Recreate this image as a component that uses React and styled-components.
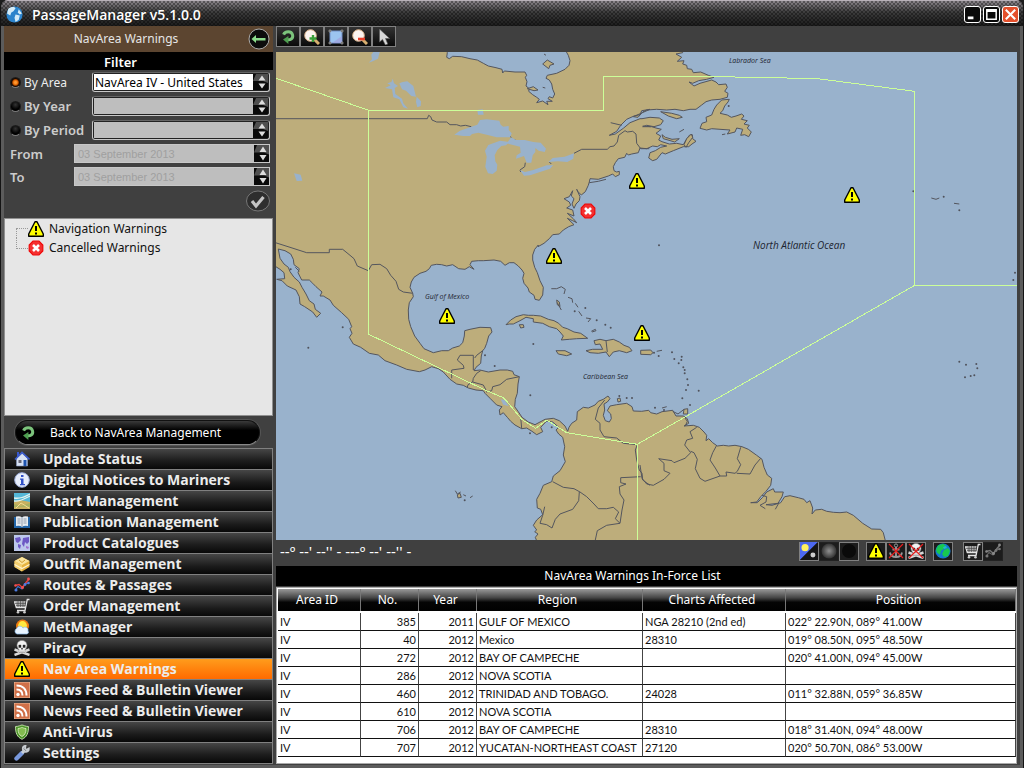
import React, { useState } from "react";
import styled, { createGlobalStyle, css } from "styled-components";

const GlobalStyle = createGlobalStyle`
	* {
		box-sizing: border-box;
	}
	body {
		margin: 0;
		background: #1c1c1c;
		font-family: "Noto Sans", "Open Sans", sans-serif;
		font-size: 12px;
		color: #e6e6e6;
	}
	button, input, select {
		font: inherit;
		color: inherit;
	}
`;

/* ---------- window frame ---------- */

const Window = styled.div`
	display: flex;
	flex-direction: column;
	min-height: 100vh;
	background: #404040;
	border: 1px solid #141414;
	border-top: none;
	border-radius: 8px 8px 0 0;
	overflow: hidden;
	box-shadow: inset 3px 0 #5c5c5c, inset -3px 0 #5c5c5c, inset 0 -3px #5c5c5c;
`;

const TitleBar = styled.header`
	display: flex;
	align-items: center;
	height: 26px;
	padding: 2px 4px 0 5px;
	border-top: 1px solid #b8b0b8;
	background:
		repeating-conic-gradient(rgba(0, 0, 0, 0.35) 0 25%, transparent 0 50%) 0 0 / 4px 4px,
		linear-gradient(#8c868c, #3c3c3c 45%, #1c1c1c);
`;

const Title = styled.h1`
	flex: 1;
	margin: 0 0 0 9px;
	font-family: "Open Sans", sans-serif;
	font-size: 14px;
	line-height: 20px;
	font-weight: 600;
	color: #fff;
`;

const WindowButton = styled.button`
	display: flex;
	width: 17px;
	height: 17px;
	margin-left: 2px;
	padding: 0;
	border: 1px solid #fff;
	border-radius: 3px;
	background: ${p => (p.$close ? "#e4502c" : "#0a0a0a")};
`;

const Body = styled.div`
	flex: 1;
	display: flex;
	gap: 3px;
	padding: 0 6px 4px 3px;
`;

/* ---------- sidebar ---------- */

const Sidebar = styled.aside`
	flex: none;
	width: 269px;
	display: flex;
	flex-direction: column;
`;

const SectionTitle = styled.div`
	display: flex;
	align-items: center;
	height: 26px;
	padding: 0 3px 0 0;
	background: #5c4530;
	h2 {
		flex: 1;
		margin: 0;
		padding-bottom: 2px;
		font-size: 12px;
		font-weight: 400;
		text-align: center;
	}
`;

const RoundButton = styled.button`
	width: 22px;
	height: 22px;
	padding: 0;
	border: none;
	background: none;
	svg {
		display: block;
	}
`;

const FilterTitle = styled.h3`
	margin: 0;
	padding-right: 36px;
	height: 18px;
	line-height: 20px;
	font-size: 13px;
	font-weight: 600;
	text-align: center;
	color: #fff;
	background: #000;
`;

const Filter = styled.form`
	display: flex;
	flex-direction: column;
	gap: 4px;
	height: 148px;
	padding: 2px 3px 0 6px;
`;

const FilterRow = styled.div`
	display: flex;
	align-items: center;
	height: ${p => (p.$date ? 19 : 20)}px;
`;

const FilterLabel = styled.label`
	flex: 1;
	display: flex;
	align-items: center;
	gap: 3px;
	white-space: nowrap;
	font-size: ${p => (p.$on ? 12 : 13)}px;
	font-weight: ${p => (p.$on ? 400 : 600)};
	color: ${p => (p.$on ? "#eee" : "#ccc")};
`;

const Radio = styled.input`
	appearance: none;
	width: 11px;
	height: 11px;
	margin: 0;
	border: 1px solid #1c1c1c;
	border-bottom-color: #777;
	border-radius: 50%;
	background: radial-gradient(circle at 50% 30%, #333, #000 60%);
	&:checked {
		background: radial-gradient(#ff9a30 0 15%, #e06000 40%, #1a0a00 60%);
	}
`;

const Combo = styled.div`
	flex: none;
	display: flex;
	width: ${p => (p.$date ? 196 : 178)}px;
	height: 100%;
	padding: ${p => (p.$date ? 0 : 1)}px;
	border: 1px solid #c8c8c8;
	border-top-color: ${p => (p.$date ? "#c8c8c8" : "#666")};
	border-radius: ${p => (p.$date ? 0 : 3)}px;
	background: ${p => (p.$date ? "#bebebe" : "#222")};
	select, input {
		flex: 1;
		min-width: 0;
		appearance: none;
		border: none;
		border-radius: 0;
		padding: 0 1px;
		outline: none;
		background: #fff;
		color: #000;
		opacity: 1;
	}
	select:disabled, input:disabled {
		background: #bebebe;
		color: #a0a0a0;
	}
	input {
		padding: 0 3px;
		font-family: "Liberation Sans", Arial, sans-serif;
		font-size: 11px;
	}
	svg {
		flex: none;
	}
`;

const ApplyRow = styled.div`
	display: flex;
	justify-content: flex-end;
	padding-right: 2px;
`;

const Tree = styled.ul`
	flex: 1;
	min-height: 120px;
	margin: 0;
	padding: 0 0 0 22px;
	list-style: none;
	background: #e6e6e6;
	border: 1px solid #909090;
	color: #111;
`;

const TreeItem = styled.li`
	display: flex;
	align-items: center;
	gap: 5px;
	height: 19px;
	font-size: 12px;
	&::before {
		content: "";
		align-self: ${p => (p.$last ? "flex-start" : "flex-end")};
		width: 11px;
		height: ${p => (p.$last ? 10 : 9)}px;
		margin-left: -11px;
		margin-right: -5px;
		border-left: 1px dotted #999;
		border-${p => (p.$last ? "bottom" : "top")}: 1px dotted #999;
	}
`;

const BackButton = styled.button`
	display: flex;
	align-items: center;
	gap: 14px;
	height: 25px;
	margin: 4px 13px 3px 11px;
	padding: 0 4px;
	border: 1px solid #111;
	border-bottom-color: #888;
	border-radius: 13px;
	background: linear-gradient(#3a3a3a, #000 40%, #000);
	box-shadow: 0 0 0 1px #555;
	color: #fff;
`;

const Nav = styled.nav`
	border: 1px solid #808080;
	border-bottom: none;
`;

const NavButton = styled.button`
	display: flex;
	align-items: center;
	gap: 13px;
	width: 100%;
	height: 21px;
	padding: 0 9px;
	border: none;
	border-bottom: 1px solid #808080;
	background: linear-gradient(#464646, #1c1c1c 60%, #080808);
	font-family: "Open Sans", sans-serif;
	font-size: 14px;
	line-height: 20px;
	font-weight: 700;
	color: #ececec;
	${p => p.$active && css`
		background: linear-gradient(#ff9c1c, #ff6a00);
	`}
`;

/* ---------- main area ---------- */

const Main = styled.main`
	flex: 1;
	min-width: 0;
	display: flex;
	flex-direction: column;
`;

const Toolbar = styled.div`
	display: flex;
	height: 26px;
	align-items: flex-start;
`;

const ToolButton = styled.button`
	display: flex;
	align-items: center;
	justify-content: center;
	width: 24px;
	height: 21px;
	padding: 0;
	border: 1px solid #808080;
	background: linear-gradient(#333, #0a0a0a);
`;

const MapView = styled.svg`
	flex: 1;
	display: block;
	width: 100%;
	height: 0;
	min-height: 240px;
	background: #99b2cc;
	font-family: "Open Sans", "Noto Sans", sans-serif;
	font-style: italic;
`;

const StatusBar = styled.div`
	display: flex;
	align-items: center;
	height: 26px;
	padding: 0 14px 4px 4px;
	color: #fff;
`;

const Coordinates = styled.span`
	flex: 1;
	font-size: 15px;
	line-height: 20px;
`;

const Group = styled.div`
	display: flex;
	margin-left: ${p => p.$gap || 0}px;
`;

const Toggle = styled.button`
	display: flex;
	align-items: center;
	justify-content: center;
	width: 20px;
	height: 19px;
	padding: 0;
	border: 1px solid ${p => (p.$flat ? "#222" : "#808080")};
	background: #1c1c1c;
`;

const ListTitle = styled.h2`
	margin: 0 0 1px;
	height: 20px;
	line-height: 20px;
	font-size: 12px;
	font-weight: 400;
	text-align: center;
	color: #fff;
	background: #000;
	padding-right: 28px;
`;

const ListPanel = styled.div`
	height: 177px;
	border: 1px solid #aaa;
	background: #fff;
	padding: 1px 0 0 1px;
`;

const Table = styled.table`
	width: 100%;
	table-layout: fixed;
	border-collapse: separate;
	border-spacing: 0;
	font-family: Lato, sans-serif;
	font-size: 11px;
	line-height: 16px;
	color: #111;
	th {
		height: 22px;
		padding: 0 4px 0 0;
		font-family: "Noto Sans", sans-serif;
		font-size: 12px;
		font-weight: 400;
		color: #fff;
		background: linear-gradient(#999, #444 40%, #050505 60%, #000);
		border-right: 1px solid #777;
	}
	tbody::before {
		content: "";
		display: block;
		height: 2px;
	}
	td {
		height: 18px;
		padding: 0 0 0 2px;
		border-bottom: 1px solid #111;
		border-right: 1px solid #444;
		white-space: nowrap;
		overflow: hidden;
	}
	td.num {
		text-align: right;
		padding: 0 2px;
	}
`;

const Col = styled.col`
	width: ${p => (p.$width ? p.$width + "px" : "auto")};
`;

/* ---------- icons ---------- */

const Icon = ({ children, size = 16, ...rest }) => (
	<svg width={size} height={size} viewBox="0 0 16 16" aria-hidden="true" {...rest}>
		{children}
	</svg>
);

const WarningShape = () => (
	<g>
		<path d="M7 .7h2L15.3 13v2.300H.7V13Z" fill="#ff0" stroke="#000" strokeWidth="1.400" strokeLinejoin="round" />
		<path d="M7 5h2v5H7ZM7 11.500h2v2H7Z" fill="#000" />
	</g>
);

const CancelShape = () => (
	<g>
		<path d="M5 1.200h6L14.800 5v6L11 14.800H5L1.200 11V5Z" fill="#f43030" stroke="#f00808" strokeWidth="1.200" />
		<path d="M5 5l6 6M11 5l-6 6" stroke="#fff" strokeWidth="2.600" />
	</g>
);

const Warning = () => <Icon><WarningShape /></Icon>;
const Cancel = () => <Icon><CancelShape /></Icon>;

const Globe = () => (
	<Icon size={17}>
		<circle cx="8" cy="8" r="7.600" fill="#2c84cc" />
		<path d="M2 3c3-3 6-2 7-1l-2 3-2 1-1 3-3-2Zm7 5 4 1-1 4-3 2-1-4Zm3-5 3 4-2 1-2-2Z" fill="#d4ecf8" />
	</Icon>
);

const Refresh = () => (
	<Icon>
		<path d="M3.600 5.600C5 2 11.500 1.600 12.600 6c.8 3.600-2.600 5.400-5.600 4.600" fill="none" stroke="#7cc47c" strokeWidth="3" />
		<path d="M8.400 7v8L3 10.600Z" fill="#4e9e50" />
	</Icon>
);

const Magnifier = ({ plus }) => (
	<Icon>
		<path d="M10 10l5 5" stroke="#d8b070" strokeWidth="3" />
		<circle cx="6.500" cy="6.500" r="5.800" fill="#fbf4f0" stroke="#d8b088" />
		{plus
			? <path d="M9 6v7M5.500 9.500h7" stroke="#3aa03a" strokeWidth="2.400" />
			: <path d="M6 10h7" stroke="#e8402c" strokeWidth="2.600" />}
	</Icon>
);

const Extent = () => (
	<Icon>
		<path d="M2 2h12v12H2Z" fill="#9cc4f0" stroke="#7090c8" />
		<path d="M14 7v7H4Z" fill="#a0a0dc" opacity=".7" />
		<path d="M1 1h2v2H1ZM13 1h2v2h-2ZM1 13h2v2H1ZM13 13h2v2h-2Z" fill="#555" stroke="#aaa" strokeWidth=".6" />
	</Icon>
);

const Pointer = () => (
	<Icon>
		<path d="M3.500 0v13l3-2.600L9.400 16l2.400-1L9.500 9.500h4.200Z" fill="#d8d8d8" stroke="#555" strokeWidth=".6" />
	</Icon>
);

const House = () => (
	<Icon>
		<path d="M3 1h2v3L3 6Z" fill="#3858d0" />
		<path d="M2.500 7.500 8.500 2l5 5.500V15h-11Z" fill="#d8e2f4" stroke="#8898c0" strokeWidth=".6" />
		<path d="M1 8.500 8 1.500l7.500 7" fill="none" stroke="#3c5ccc" strokeWidth="1.700" />
		<path d="M9.500 9h3v6h-3Z" fill="#1e54b0" />
		<path d="M4.500 9h3v3h-3Z" fill="#667" />
	</Icon>
);

const Info = () => (
	<Icon>
		<circle cx="8" cy="8" r="7.300" fill="#e8eefc" stroke="#9cacd8" />
		<path d="M7 3h2.500v2H7ZM6 6.500h3.500V12H11v1.300H6V12h1V7.800H6Z" fill="#3050c8" />
	</Icon>
);

const Chart = () => (
	<Icon>
		<path d="M0 0h16v16H0Z" fill="#54b8d8" />
		<path d="M0 9l6-2 10 2v7H0Z" fill="#c8b060" />
		<path d="M0 11l7 2 9-3v4H0Z" fill="#a8b060" />
		<path d="M0 5c6 1 10-1 16-4M0 8c6 1 10-2 16-5" stroke="#e4f4f0" fill="none" strokeWidth="1.300" />
		<path d="M2 15l5-5 8 5" stroke="#f0dc90" fill="none" />
	</Icon>
);

const Book = () => (
	<Icon>
		<path d="M0 3h16v11H0Z" fill="#2466a8" />
		<path d="M2 2.500q4-1 6 1 2-2 6-1v9.500q-4-1-6 1-2-2-6-1Z" fill="#e8ecf0" />
		<path d="M8 3.500V13M3.500 5H6.500M3.500 7H6.500M3.500 9H6.500M9.500 5h3M9.500 7h3M9.500 9h3" stroke="#8894a4" strokeWidth=".9" />
	</Icon>
);

const Catalogue = () => (
	<Icon>
		<path d="M0 0h16v16H0Z" fill="#bcc8ec" />
		<path d="M1 3l5-1 1 3-3 3-2-1ZM4 9l3 1-1 4-2-2ZM9 3l6-1v5l-2 2-2-2-1 5-2-3Z" fill="#6c58c4" />
		<path d="M12 11l3 1-1 2-2-1Z" fill="#a070d0" />
	</Icon>
);

const Package = () => (
	<Icon>
		<path d="M8 1 15.500 5v6L8 15.500.5 11V5Z" fill="#e8b440" />
		<path d="M8 1 15.500 5 8 9 .5 5Z" fill="#fbe49c" />
		<path d="M8 9v6.500L.5 11V5Z" fill="#f4d070" />
		<path d="M.5 8.500 8 12.500l7.500-4" fill="none" stroke="#fff4d0" strokeWidth="1.200" />
		<path d="M5 4l3 2.500L11 4" stroke="#d09c30" fill="none" />
	</Icon>
);

const Route = ({ gray }) => (
	<Icon>
		<path d="M1 13.500 4 9.500 8 12l3-5 4-1" fill="none" stroke={gray ? "#666" : "#4070d0"} strokeWidth="1.200" />
		<path d="M1 8.500 5 7.500l3.500 3L12 5.500l3-3.500" fill="none" stroke={gray ? "#777" : "#e04040"} strokeWidth="1.400" />
		<g fill={gray ? "#777" : "#4c7ce0"}>
			<circle cx="2" cy="13" r="1.500" />
			<circle cx="11" cy="7.500" r="1.400" />
			<circle cx="14.500" cy="6" r="1.300" />
		</g>
		<g fill={gray ? "#888" : "#f05050"}>
			<circle cx="1.500" cy="8.500" r="1.300" />
			<circle cx="8.500" cy="10.500" r="1.500" />
			<circle cx="14.500" cy="2" r="1.400" />
		</g>
	</Icon>
);

const Cart = () => (
	<Icon>
		<path d="M0 3h11.500l-1 6.500h-8Z" fill="#aaa" />
		<path d="M15.500 1.500h-2.200L11 12.500H3M.5 3.500l1.800 6h9" fill="none" stroke="#e4e4e4" strokeWidth="1.300" />
		<path d="M1 5.500h11M2 7.500h9.500M4 3v6M6.500 3v6M9 3v6" stroke="#444" strokeWidth=".6" />
		<circle cx="4" cy="14.300" r="1.300" fill="#ccc" />
		<circle cx="10.500" cy="14.300" r="1.300" fill="#ccc" />
	</Icon>
);

const Weather = () => (
	<Icon>
		<circle cx="8.500" cy="7" r="6.500" fill="#f07c10" />
		<circle cx="8.500" cy="6.500" r="4.400" fill="#ffe840" />
		<path d="M3 15a3 3 0 0 1-.4-5.500A3.500 3.500 0 0 1 9 9a3 3 0 0 1 5 3 2 2 0 0 1-1 3Z" fill="#e8f4ff" stroke="#88b8e8" strokeWidth=".7" />
	</Icon>
);

const SkullShape = () => (
	<g>
		<path d="M.5 9.500l15 5.500M15.500 9.500.5 15" stroke="#d8d8d8" strokeWidth="2.400" />
		<path d="M3 6C2.500-1.500 13.500-1.500 13 6l-1 2.500-1 1v3H5v-3l-1-1Z" fill="#f2f2f2" stroke="#888" strokeWidth=".6" />
		<path d="M4.800 5h2.200v2.500H4.800ZM9 5h2.200v2.500H9ZM7.500 8h1v1.300h-1ZM7 10.500v1.500M9 10.500v1.500" fill="#222" stroke="#333" strokeWidth=".4" />
	</g>
);

const Skull = () => <Icon><SkullShape /></Icon>;

const Cross = () => <path d="M1 1l14 14M15 1 1 15" stroke="#e81c1c" strokeWidth="1.200" />;

const SkullOff = () => <Icon><SkullShape /><Cross /></Icon>;

const AnchorOff = () => (
	<Icon>
		<path d="M8 4v10M4.500 6.500h7M2 9.500c.5 3 3 4.500 6 4.500s5.500-1.500 6-4.500" fill="none" stroke="#999" strokeWidth="1.800" />
		<circle cx="8" cy="2.500" r="1.600" fill="none" stroke="#999" />
		<Cross />
	</Icon>
);

const Feed = () => (
	<Icon>
		<path d="M0 0h16v16H0Z" fill="#d07048" stroke="#e8b898" strokeWidth="1.200" />
		<circle cx="4" cy="12.500" r="1.700" fill="#fff" />
		<path d="M2.500 7.500c4 0 6 2.500 6 6M2.500 3.500c6.500 0 10 4 10 10" fill="none" stroke="#fff" strokeWidth="2" />
	</Icon>
);

const Shield = () => (
	<Icon>
		<path d="M1.500 2.500C5 2.500 6.500 1 8 1s3 1.500 6.500 1.500C14.500 9 13 13 8 15.300 3 13 1.500 9 1.500 2.500Z" fill="#4c9428" stroke="#b8d8a0" />
		<path d="M4 4.500C6 4.500 7 3.500 8 3.500s2 1 4 1c0 4-1 6.500-4 8-3-1.500-4-4-4-8Z" fill="#84bc50" stroke="#e0f0c8" strokeWidth=".8" />
	</Icon>
);

const Wrench = () => (
	<Icon>
		<path d="M2.500 13.500 8 8" stroke="#7898dc" strokeWidth="4.400" strokeLinecap="round" />
		<path d="M8 8l3-3" stroke="#c8d0d8" strokeWidth="3" />
		<path d="M14.800 3.500A3 3 0 1 1 11.500.8L11 3.500l1.500 1.200Z" fill="none" stroke="#c8ccd0" strokeWidth="1.800" />
	</Icon>
);

const Earth = () => (
	<Icon>
		<circle cx="8" cy="8" r="7.600" fill="#1478d0" />
		<path d="M3 2.500 8 .8l3 2-2 3-3 2-1 4-3-2-1-3ZM9 7l4-2 2 3-2 5-4 1-2-3Z" fill="#18c850" />
		<path d="M8 4l3-1 1 2-3 1Z" fill="#20b8d0" />
	</Icon>
);

const DayNight = () => (
	<Icon size={18}>
		<path d="M0 0h16L0 16Z" fill="#4c68f0" />
		<path d="M16 0v16H0Z" fill="#141414" />
		<circle cx="4.500" cy="5" r="3.200" fill="#fff060" />
		<circle cx="11.500" cy="11.500" r="2.200" fill="#ccc" />
	</Icon>
);

const Dusk = () => (
	<Icon>
		<defs>
			<radialGradient id="dusk">
				<stop offset="0" stopColor="#909090" />
				<stop offset="1" stopColor="#333" />
			</radialGradient>
		</defs>
		<circle cx="8" cy="8" r="7.500" fill="url(#dusk)" />
	</Icon>
);

const Night = () => (
	<Icon>
		<circle cx="8" cy="8" r="7" fill="#0a0a0a" />
	</Icon>
);

const Spinner = () => (
	<svg width="15" height="100%" viewBox="0 0 15 16" preserveAspectRatio="none" aria-hidden="true">
		<path d="M0 0h15v16H0Z" fill="#0a0a0a" />
		<path d="M3 0h12v9L10 7H0Z" fill="#888" opacity=".55" />
		<path d="M9 1.500l3.500 5h-7ZM9 14.500l3.500-5h-7Z" fill="#ddd" />
	</svg>
);

const BackArrow = () => (
	<svg width="22" height="22" viewBox="0 0 22 22" aria-hidden="true">
		<circle cx="11" cy="11" r="10" fill="#0c0c0c" stroke="#aaa" />
		<path d="M3.500 11 8 7v3h9.500v2.500H8V15Z" fill="#8cdc8c" />
	</svg>
);

const Check = () => (
	<svg width="24" height="22" viewBox="0 0 24 22" aria-hidden="true">
		<ellipse cx="12" cy="11" rx="11.500" ry="10" fill="#2e2e2e" stroke="#777" />
		<path d="M6 11l4 5 7.500-9" fill="none" stroke="#c4c4c4" strokeWidth="3.200" />
	</svg>
);

/* ---------- map data ---------- */

// The coastline is kept on four overlapping sheets, three units to a map pixel.
const sheets = {
	nw: [810, 0],
	ne: [1920, 0],
	sw: [810, 690],
	se: [1920, 690]
};

const project = (sheet, pair) => {
	const [x, y] = pair.split(",").map(Number);
	const [ox, oy] = sheets[sheet];
	return [((x + ox - 828) / 3).toFixed(1), ((y + oy - 156) / 3).toFixed(1)];
};

const trace = parts =>
	"M" +
	parts
		.map(([sheet, points]) => points.split(" ").map(p => project(sheet, p).join(" ")).join("L"))
		.join("L");

const mainland = trace([
	["nw", "0,140 528,140 532,158 530,172 538,176 548,169 575,170 600,176 622,180 640,190 655,198 678,203 696,208 698,219 703,213 735,216 765,216 770,226 766,232 771,245 768,258 778,266 776,274 788,284 800,292 808,298 800,308 818,303 834,314 830,304 847,304 834,296 838,290 848,294 854,282 848,268 845,252 838,240 828,235 832,226 860,220 885,208 897,196 900,182 895,166 886,150"],
	["ne", "-40,140 118,140 128,158 108,162 125,172 112,184 132,182 128,192 140,196 142,206 155,208 160,218 182,216 205,226 222,232 200,238 176,242 158,250 147,246 162,258 180,250 215,240 228,246 236,254 258,252 262,262 254,274 264,280 262,292 240,298 215,300 198,305 185,315 168,328 150,328 130,332 105,328 80,330 50,328 20,330 8,336 -6,352 -20,350"],
	["nw", "1140,328 1115,332 1110,344 1092,348 1070,358 1052,376 1040,394 1018,406 1036,402 1060,385 1080,368 1110,356"],
	["ne", "6,356 30,352 58,354 70,362 62,374 42,380 20,376 8,380 35,380 48,384 64,388 48,400 62,408 56,420 66,425 88,432 110,430 130,434 138,420 148,406 157,404 158,416 168,424 156,432 146,440 130,440 100,452 76,462 66,458 50,478 38,482 26,474 30,458 46,452 62,442 80,438 62,434 52,440 38,438 20,446 0,444"],
	["nw", "1105,458 1085,462 1075,465 1070,460 1064,472 1045,476 1036,488 1030,500 1032,512 1040,516 1048,514 1048,524 1036,530 1028,522 1015,528 985,538 960,536 958,546 955,556 946,575 934,585 924,575 920,568 930,590 928,602 918,612 912,625 906,612 912,596 904,588 908,572 898,590 882,596 898,606 902,616 890,624 908,630 912,648 892,640 910,656 920,668 908,662 892,655 912,674 896,680 880,690 868,702 848,704 838,716 822,730 804,740"],
	["sw", "805,45 794,58 788,75 788,90 794,112 802,128 810,152 820,172 818,195 808,211 795,208 792,196 778,186 774,174 762,160 758,145 762,130 756,120 745,108 732,98 718,98 705,106 692,94 672,90 640,92 625,92 605,94 600,104 612,118 598,110 585,118 566,116 548,104 530,108 515,104 500,103 484,106 478,116 468,124 450,130 432,142 424,156 420,172 428,190 430,200 418,218 415,240 416,268 422,290 434,318 450,340 462,356 490,368 515,362 535,362 548,354 568,348 578,338 583,318 584,302 600,298 630,292 662,293 666,306 656,318 650,340 644,355 638,362 634,378 632,400 618,412 612,422 630,420 655,426 690,420 712,420 728,424 732,434 748,440 744,462 742,490 736,508 734,530 745,545 756,562 775,576 795,584 810,576 825,568 850,565 868,572 885,588 893,604 897,592 905,580 920,570 922,545 940,532 955,534 975,525 985,514 1000,508 1014,498 1020,506 1012,516 1002,522 1004,540 1000,556 1006,572 1018,576 1024,566 1022,552 1012,542 1020,528 1040,524 1070,520 1086,530 1090,543 1115,544"],
	["se", "26,541 32,548 50,552 66,545 98,541 108,558 130,558 142,566 146,580 132,588 160,586 178,592 192,606 200,616 198,632 206,626 218,638 232,648 250,646 266,648 285,646 306,650 325,658 350,676 366,688 372,712 382,735 395,745 392,766 378,784 362,800 350,816 332,818 352,818 368,802 380,786 400,776 404,786 430,786 426,800 414,820 378,824 396,826 422,818 434,800 450,797 475,803 492,808 500,818 510,812 518,834 516,852 526,840 545,838 560,844 580,847 600,848 620,846 640,856 668,880 695,897 722,898 730,908 738,940"],
	["sw", "805,945 796,922 804,912 794,905 800,900 790,886 800,870 818,854 812,838 802,834 800,808 810,790 820,766 845,755 850,738 870,722 886,695 880,675 884,650 878,622 866,612 858,600 866,592 848,576 830,573 812,592 818,605 800,614 786,604 770,594 755,596 735,585 722,574 712,562 700,548 690,555 688,540 696,530 680,525 660,505 645,490 640,482 618,480 595,474 580,466 560,462 540,448 520,426 505,416 485,410 465,420 448,425 410,418 380,405 345,392 325,375 298,370 272,352 250,342 238,322 246,310 240,296 245,290 236,268 215,248 190,226 180,210 160,198 150,198 156,186 138,170 128,160 118,150 95,150 84,128 88,116 72,104 70,88 62,72 45,62 25,57 30,85 42,102 55,112 60,125 72,142 88,156 96,172 108,192 118,212 132,222 136,238 152,250 140,262 128,246 104,230 90,222 88,200 78,180 52,168 36,152 20,148 44,146 42,128 30,118 8,104"]
]) + "Z";

const islands = [
	["ne", "180,385 186,370 200,365 198,352 215,345 222,328 230,315 245,300 268,298 264,306 254,318 248,332 240,340 262,345 274,352 288,348 305,342 312,348 304,358 322,362 312,372 328,376 322,384 334,396 326,410 314,404 302,406 308,388 290,384 285,396 262,402 270,390 240,388 215,386 200,390"],
	["ne", "62,335 95,340 118,346 127,352 110,356 85,348"],
	["ne", "66,404 76,412 96,418 118,416 104,426 84,420 70,416"],
	["ne", "132,434 140,416 154,402 158,412 146,428 138,442"],
	["sw", "708,284 722,270 738,260 760,254 775,256 790,256 812,258 835,268 852,272 866,280 878,292 892,296 912,306 932,310 953,325 920,326 898,328 874,330 880,318 870,306 860,296 838,290 818,280 790,276 790,266 768,262 750,272 730,282 718,282"],
	["sw", "748,284 760,284 762,292 752,294"],
	["sw", "858,362 885,362 905,372 890,377 865,372"],
	["sw", "972,332 990,328 1008,332 1030,328 1048,336 1062,346 1078,352 1086,362 1070,368 1048,362 1030,366 1018,380 1008,366 985,370 960,368 948,362 968,358 998,358 990,342 976,344"],
	["sw", "1112,361 1142,360 1149,368 1142,374 1112,373"],
	["sw", "860,210 868,216 870,230 862,224"],
	["se", "132,538 143,536 143,552 130,552"],
	["nw", "772,266 790,260 804,270 792,272"],
	["nw", "818,192 832,180 852,192 840,196 836,206"],
	["sw", "562,794 570,790 574,802 564,804"],
	["sw", "1042,506 1050,504 1052,514 1044,516"]
].map(part => trace([part]) + "Z");

const lakes = [
	["nw", "553,404 570,392 600,382 622,374 630,360 650,358 688,362 692,374 700,380 716,378 716,390 725,400 720,412 700,412 680,412 650,404 625,398 606,402 600,408 580,408"],
	["nw", "645,452 655,435 690,422 718,426 708,436 694,438 682,450 674,466 676,484 682,494 680,512 668,522 654,520 646,500 650,470"],
	["nw", "710,430 724,412 738,420 764,420 790,426 812,428 828,446 824,456 806,452 796,444 796,456 788,466 784,488 770,488 762,468 738,476 740,466 752,458 750,440"],
	["nw", "750,510 765,516 790,510 830,496 850,496 840,506 810,516 780,526 762,527"],
	["nw", "835,486 848,474 884,470 912,460 910,476 892,486 864,484"],
	["nw", "622,330 638,328 641,344 624,344"],
	["nw", "388,250 398,246 412,244 430,258 438,290 424,288 408,272 396,268"],
	["nw", "345,264 362,256 352,250 364,246 368,236 372,250 384,258 374,264 376,282 396,296 400,310 414,326 400,322 388,298 370,292 366,268"],
	["nw", "440,290 453,304 452,318 442,322 438,306"],
	["nw", "72,520 92,524 97,542 80,543"],
	["nw", "296,188 306,178 304,164 314,150 330,152 324,176 308,184"],
	["sw", "692,508 704,510 716,528 700,524"]
].map(part => trace([part]) + "Z");

const borders = [
	["nw", "10,356 472,356 476,346 482,350 486,360 500,366 530,366 540,374 560,374 572,378 586,376 604,380"],
	["nw", "708,406 722,410 728,418 740,422"],
	["nw", "766,488 764,500 750,510 752,516"],
	["nw", "838,486 844,492"],
	["nw", "912,460 935,448 1012,448 1020,440 1032,438 1042,426 1046,406 1065,392 1072,396 1088,394 1098,402 1100,430 1112,446 1138,446"],
	["nw", "1022,368 1055,376"],
	["nw", "1118,378 1142,380"],
	["nw", "958,548 985,544 1008,538"],
	["sw", "10,36 60,52 110,68 178,68 178,58 218,58 240,76 252,86 262,108 295,122 305,104 330,103 350,116 362,136 378,154 386,178 400,186 428,190"],
	["sw", "545,445 545,420 582,415 580,406 562,390 570,376 610,376 610,420"],
	["sw", "638,362 620,376 614,384"],
	["sw", "632,422 620,430 610,445 608,456 594,464 592,472"],
	["sw", "608,456 640,465 648,480"],
	["sw", "648,486 665,482 668,470 690,464 710,448 748,440"],
	["sw", "752,562 755,596"],
	["sw", "1004,510 985,534 976,568 990,580 990,600 1002,620 1040,624 1060,640 1102,644 1096,660 1100,690 1108,720 1116,730 1118,750 1140,766"],
	["sw", "848,755 880,772 912,776 930,786 950,800 972,822 985,836 1010,836 1030,832 1046,846 1036,866 1050,880"],
	["sw", "1112,740 1052,743 1052,758 1068,762 1048,770 1050,792 1062,810 1056,840 1050,880 1010,886 982,902 976,930"],
	["sw", "928,786 926,812 908,838 870,852 856,868 846,894 830,884 810,880 818,856 824,830"],
	["se", "0,705 6,745 20,762 40,766 72,748 90,730 72,722 72,700 56,686 96,692 102,698 135,685 152,668 134,645 140,630 158,625 150,605 170,592"],
	["se", "152,664 162,668 172,688 166,716 180,745 195,754 240,738 260,738 258,726 285,730 292,724 302,704 292,686 302,652"],
	["se", "240,738 226,714 210,690 218,668 230,646"],
	["se", "290,730 330,732 345,705 362,685"],
	["se", "366,796 380,800 378,816 360,826 376,836"],
	["se", "416,820 406,838"],
	["se", "132,560 142,574 136,588"],
	["se", "98,544 114,552 132,538"],
	["sw", "844,176 860,176 874,170 886,178 882,192"],
	["sw", "894,202 906,206 908,218"],
	["sw", "916,220 924,232"],
	["sw", "926,244 936,258"],
	["sw", "948,264 962,266 954,276"],
	["sw", "964,304 976,298 978,302 966,306"],
	["sw", "1008,332 1012,366"],
	["sw", "862,218 874,240"],
	["sw", "556,782 562,792 572,786"],
	["sw", "580,794 588,798"],
	["sw", "600,803 608,798"],
	["sw", "76,112 88,124"],
	["ne", "874,594 888,598 898,594"],
	["ne", "942,610 958,612"],
	["ne", "118,396 132,388"],
	["ne", "246,404 256,402"],
	["nw", "822,162 828,166"],
	["nw", "818,262 826,264"],
	["se", "50,364 66,361"],
	["se", "66,534 80,530"]
].map(part => trace([part]));

const islets = [
	["sw", "218,292 115,353 790,342 781,496 674,408 645,376 946,234 914,244 980,271 1006,284 1022,293 1070,504 1086,504 1048,498 62,118 584,811 780,610 845,592"],
	["se", "42,368 56,378 96,367 103,387 125,380 124,390 116,400 130,412 134,430 134,420 142,448 144,465 138,480 127,505 176,482 150,525 45,533 72,540"],
	["se", "958,395 978,404 1009,402 1012,415 975,442 992,438 1003,436 1125,128 1120,150 57,46"],
	["ne", "820,574 911,590 958,631 266,318"]
].flatMap(([sheet, points]) => points.split(" ").map(p => project(sheet, p)));

const areaLimits = [
	[["nw", "10,232 296,331 1000,331 1000,230 1140,230"], ["ne", "285,230 286,232 440,232 441,235 525,235 824,274"], ["se", "824,166 1140,166"]],
	[["nw", "296,331"], ["sw", "296,313 545,432 645,480 700,503 712,516 755,568 797,595 830,570 890,608 1102,643"], ["se", "824,166"]],
	[["sw", "1102,643 1102,940"]]
].map(trace);

const seaNames = [
	{ name: "Labrador Sea", x: 453, y: 11, size: 7 },
	{ name: "North Atlantic Ocean", x: 477, y: 197, size: 10 },
	{ name: "Gulf of Mexico", x: 149, y: 247, size: 7 },
	{ name: "Caribbean Sea", x: 307, y: 327, size: 7 }
];

const markers = [
	{ x: 353, y: 121 },
	{ x: 568, y: 135 },
	{ x: 270, y: 196 },
	{ x: 163, y: 256 },
	{ x: 358, y: 273 },
	{ x: 304, y: 151, cancelled: true }
];

const WarningMap = () => (
	<MapView viewBox="0 0 741 488" preserveAspectRatio="xMidYMid slice" role="img" aria-label="NavArea IV map">
		<g stroke="#54565e" strokeWidth="1" strokeLinejoin="round">
			<path d={mainland} fill="#bdad7b" />
			{islands.map(d => <path key={d} d={d} fill="#bdad7b" />)}
			{borders.map(d => <path key={d} d={d} fill="none" />)}
		</g>
		{lakes.map(d => <path key={d} d={d} fill="#99b2cc" />)}
		{islets.map(([x, y]) => <circle key={x + y} cx={x} cy={y} r="1" fill="#50525c" />)}
		{areaLimits.map(d => <path key={d} d={d} fill="none" stroke="#ccff99" shapeRendering="crispEdges" />)}
		{seaNames.map(sea => (
			<text key={sea.name} x={sea.x} y={sea.y} fontSize={sea.size} fill="#1c2430">{sea.name}</text>
		))}
		{markers.map(m => (
			<g key={m.x} transform={`translate(${m.x} ${m.y})`}>
				{m.cancelled ? <CancelShape /> : <WarningShape />}
			</g>
		))}
	</MapView>
);

/* ---------- content ---------- */

const navItems = [
	["Update Status", House],
	["Digital Notices to Mariners", Info],
	["Chart Management", Chart],
	["Publication Management", Book],
	["Product Catalogues", Catalogue],
	["Outfit Management", Package],
	["Routes & Passages", Route],
	["Order Management", Cart],
	["MetManager", Weather],
	["Piracy", Skull],
	["Nav Area Warnings", Warning],
	["News Feed & Bulletin Viewer", Feed],
	["News Feed & Bulletin Viewer", Feed],
	["Anti-Virus", Shield],
	["Settings", Wrench]
];

const columns = [
	["Area ID", 83],
	["No.", 58],
	["Year", 58],
	["Region", 166],
	["Charts Affected", 143],
	["Position", null]
];

const rows = [
	["IV", "385", "2011", "GULF OF MEXICO", "NGA 28210 (2nd ed)", "022° 22.90N, 089° 41.00W"],
	["IV", "40", "2012", "Mexico", "28310", "019° 08.50N, 095° 48.50W"],
	["IV", "272", "2012", "BAY OF CAMPECHE", "", "020° 41.00N, 094° 45.00W"],
	["IV", "286", "2012", "NOVA SCOTIA", "", ""],
	["IV", "460", "2012", "TRINIDAD AND TOBAGO.", "24028", "011° 32.88N, 059° 36.85W"],
	["IV", "610", "2012", "NOVA SCOTIA", "", ""],
	["IV", "706", "2012", "BAY OF CAMPECHE", "28310", "018° 31.40N, 094° 48.00W"],
	["IV", "707", "2012", "YUCATAN-NORTHEAST COAST", "27120", "020° 50.70N, 086° 53.00W"]
];

const filters = [
	{ id: "area", label: "By Area", value: "NavArea IV - United States" },
	{ id: "year", label: "By Year", value: "" },
	{ id: "period", label: "By Period", value: "" }
];

export default function App() {
	const [mode, setMode] = useState("area");
	const [page, setPage] = useState(10);

	return (
		<>
			<GlobalStyle />
			<Window>
				<TitleBar>
					<Globe />
					<Title>PassageManager v5.1.0.0</Title>
					<WindowButton aria-label="Minimize">
						<Icon size={15}><path d="M3 10h6v3H3Z" fill="#fff" /></Icon>
					</WindowButton>
					<WindowButton aria-label="Maximize">
						<Icon size={15}><path d="M3 3h10v10H3ZM3 4.500h10" fill="none" stroke="#fff" strokeWidth="1.600" /></Icon>
					</WindowButton>
					<WindowButton aria-label="Close" $close>
						<Icon size={15}><path d="M3 3l10 10M13 3 3 13" stroke="#fff" strokeWidth="2.200" /></Icon>
					</WindowButton>
				</TitleBar>

				<Body>
					<Sidebar>
						<SectionTitle>
							<h2>NavArea Warnings</h2>
							<RoundButton aria-label="Back"><BackArrow /></RoundButton>
						</SectionTitle>
						<FilterTitle>Filter</FilterTitle>
						<Filter onSubmit={e => e.preventDefault()}>
							{filters.map(f => (
								<FilterRow key={f.id}>
									<FilterLabel $on={mode === f.id}>
										<Radio
											type="radio"
											name="filter"
											checked={mode === f.id}
											onChange={() => setMode(f.id)}
										/>
										{f.label}
									</FilterLabel>
									<Combo>
										<select aria-label={f.label} disabled={mode !== f.id}>
											<option>{f.value}</option>
										</select>
										<Spinner />
									</Combo>
								</FilterRow>
							))}
							{["From", "To"].map(name => (
								<FilterRow key={name} $date>
									<FilterLabel htmlFor={name}>{name}</FilterLabel>
									<Combo $date>
										<input id={name} type="text" defaultValue="03 September 2013" disabled />
										<Spinner />
									</Combo>
								</FilterRow>
							))}
							<ApplyRow>
								<RoundButton type="submit" aria-label="Apply filter"><Check /></RoundButton>
							</ApplyRow>
						</Filter>

						<Tree>
							<TreeItem><Warning />Navigation Warnings</TreeItem>
							<TreeItem $last><Cancel />Cancelled Warnings</TreeItem>
						</Tree>

						<BackButton><Refresh />Back to NavArea Management</BackButton>

						<Nav>
							{navItems.map(([label, Glyph], i) => (
								<NavButton key={i} $active={page === i} onClick={() => setPage(i)}>
									<Glyph />
									{label}
								</NavButton>
							))}
						</Nav>
					</Sidebar>

					<Main>
						<Toolbar>
							<ToolButton aria-label="Refresh"><Refresh /></ToolButton>
							<ToolButton aria-label="Zoom in"><Magnifier plus /></ToolButton>
							<ToolButton aria-label="Zoom to area"><Extent /></ToolButton>
							<ToolButton aria-label="Zoom out"><Magnifier /></ToolButton>
							<ToolButton aria-label="Select"><Pointer /></ToolButton>
						</Toolbar>

						<WarningMap />

						<StatusBar>
							<Coordinates>--º --' --'' - ---º --' --'' -</Coordinates>
							<Group>
								<Toggle aria-label="Day"><DayNight /></Toggle>
								<Toggle aria-label="Dusk" $flat><Dusk /></Toggle>
								<Toggle aria-label="Night"><Night /></Toggle>
							</Group>
							<Group $gap={7}>
								<Toggle aria-label="Warnings"><Warning /></Toggle>
								<Toggle aria-label="Ports"><AnchorOff /></Toggle>
								<Toggle aria-label="Piracy"><SkullOff /></Toggle>
							</Group>
							<Group $gap={7}>
								<Toggle aria-label="World"><Earth /></Toggle>
							</Group>
							<Group $gap={10}>
								<Toggle aria-label="Order"><Cart /></Toggle>
								<Toggle aria-label="Route" $flat><Route gray /></Toggle>
							</Group>
						</StatusBar>

						<ListTitle>NavArea Warnings In-Force List</ListTitle>
						<ListPanel>
							<Table>
								<colgroup>
									{columns.map(([name, width]) => <Col key={name} $width={width} />)}
								</colgroup>
								<thead>
									<tr>
										{columns.map(([name]) => <th key={name} scope="col">{name}</th>)}
									</tr>
								</thead>
								<tbody>
									{rows.map(row => (
										<tr key={row[1]}>
											{row.map((cell, i) => (
												<td key={i} className={i === 1 || i === 2 ? "num" : undefined}>{cell}</td>
											))}
										</tr>
									))}
								</tbody>
							</Table>
						</ListPanel>
					</Main>
				</Body>
			</Window>
		</>
	);
}
